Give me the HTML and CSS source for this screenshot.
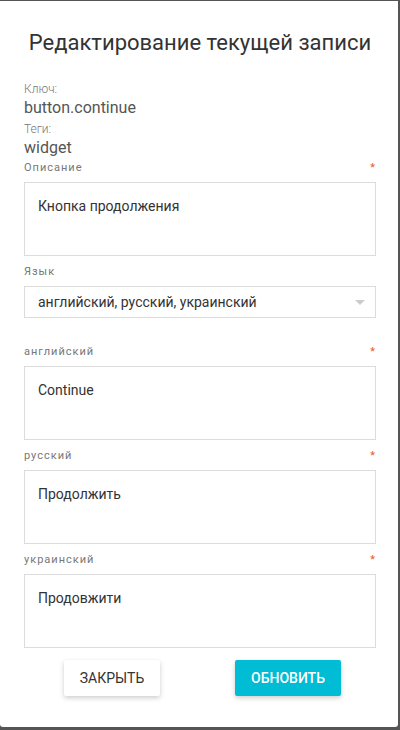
FILE: index.html
```html
<!DOCTYPE html>
<html lang="ru">
<head>
  <meta charset="UTF-8">
  <meta name="viewport" content="width=device-width, initial-scale=1.0">
  <title>Редактирование текущей записи</title>
  <link rel="stylesheet" href="styles.css">
</head>
<body>
  <div class="modal">
    <h1>Редактирование текущей записи</h1>

    <div class="info">
      <div class="info-label">Ключ:</div>
      <div class="info-value">button.continue</div>
      <div class="info-label">Теги:</div>
      <div class="info-value">widget</div>
    </div>

    <div class="field">
      <div class="field-label"><span>Описание</span><span class="req">*</span></div>
      <div class="textarea">Кнопка продолжения</div>
    </div>

    <div class="field">
      <div class="field-label"><span>Язык</span></div>
      <div class="select">
        <span>английский, русский, украинский</span>
        <span class="caret"></span>
      </div>
    </div>

    <div class="translations">
      <div class="field">
        <div class="field-label"><span>английский</span><span class="req">*</span></div>
        <div class="textarea">Continue</div>
      </div>
      <div class="field">
        <div class="field-label"><span>русский</span><span class="req">*</span></div>
        <div class="textarea">Продолжить</div>
      </div>
      <div class="field">
        <div class="field-label"><span>украинский</span><span class="req">*</span></div>
        <div class="textarea">Продовжити</div>
      </div>
    </div>

    <div class="actions">
      <button class="btn">Закрыть</button>
      <button class="btn primary">Обновить</button>
    </div>
  </div>
</body>
</html>
```

FILE: styles.css
```css
* {
  box-sizing: border-box;
  margin: 0;
  padding: 0;
}

body {
  font-family: Roboto, "Liberation Sans", sans-serif;
  background: #555;
  color: #333;
  width: 400px;
  height: 730px;
  overflow: hidden;
  padding-top: 1px;
}

.modal {
  width: 398px;
  height: 726px;
  background: #fff;
  border-radius: 0 0 3px 3px;
  padding: 30px 22px 0 24px;
}

h1 {
  font-size: 22px;
  line-height: 24px;
  font-weight: 400;
  text-align: center;
  color: #333;
}

.info {
  margin-top: 25px;
}

.info-label {
  font-size: 12px;
  line-height: 18px;
  font-weight: 300;
  color: #777;
}

.info-value {
  font-size: 16px;
  line-height: 20px;
  color: #555;
  margin-bottom: 2px;
}

.field {
  margin-top: 3px;
}

.field + .field {
  margin-top: 9px;
}

.field-label {
  display: flex;
  justify-content: space-between;
  font-size: 11px;
  line-height: 14px;
  font-weight: 400;
  letter-spacing: 1px;
  color: #777;
  margin-bottom: 7px;
}

.req {
  color: #f4511e;
  font-size: 11px;
  letter-spacing: 0;
  margin-right: 1px;
}

.textarea {
  height: 74px;
  border: 1px solid #dcdcdc;
  padding: 13px 13px;
  font-size: 14px;
  line-height: 20px;
  color: #333;
}

.select {
  height: 32px;
  border: 1px solid #dcdcdc;
  padding: 0 10px 0 13px;
  display: flex;
  align-items: center;
  justify-content: space-between;
  font-size: 14px;
  color: #333;
}

.caret {
  width: 0;
  height: 0;
  border-left: 5px solid transparent;
  border-right: 5px solid transparent;
  border-top: 5px solid #ccc;
}

.translations {
  margin-top: 27px;
}

.translations .field:first-child {
  margin-top: 0;
}

.actions {
  display: grid;
  grid-template-columns: 1fr 1fr;
  justify-items: center;
  margin-top: 12px;
}

.btn {
  height: 36px;
  padding: 0 16px;
  border: none;
  border-radius: 2px;
  background: #fff;
  color: #333;
  font-family: inherit;
  font-size: 14px;
  text-transform: uppercase;
  box-shadow: 0 2px 5px rgba(0,0,0,0.2);
  cursor: pointer;
}

.btn.primary {
  background: #00bcd4;
  color: #fff;
  font-weight: 500;
}
```
